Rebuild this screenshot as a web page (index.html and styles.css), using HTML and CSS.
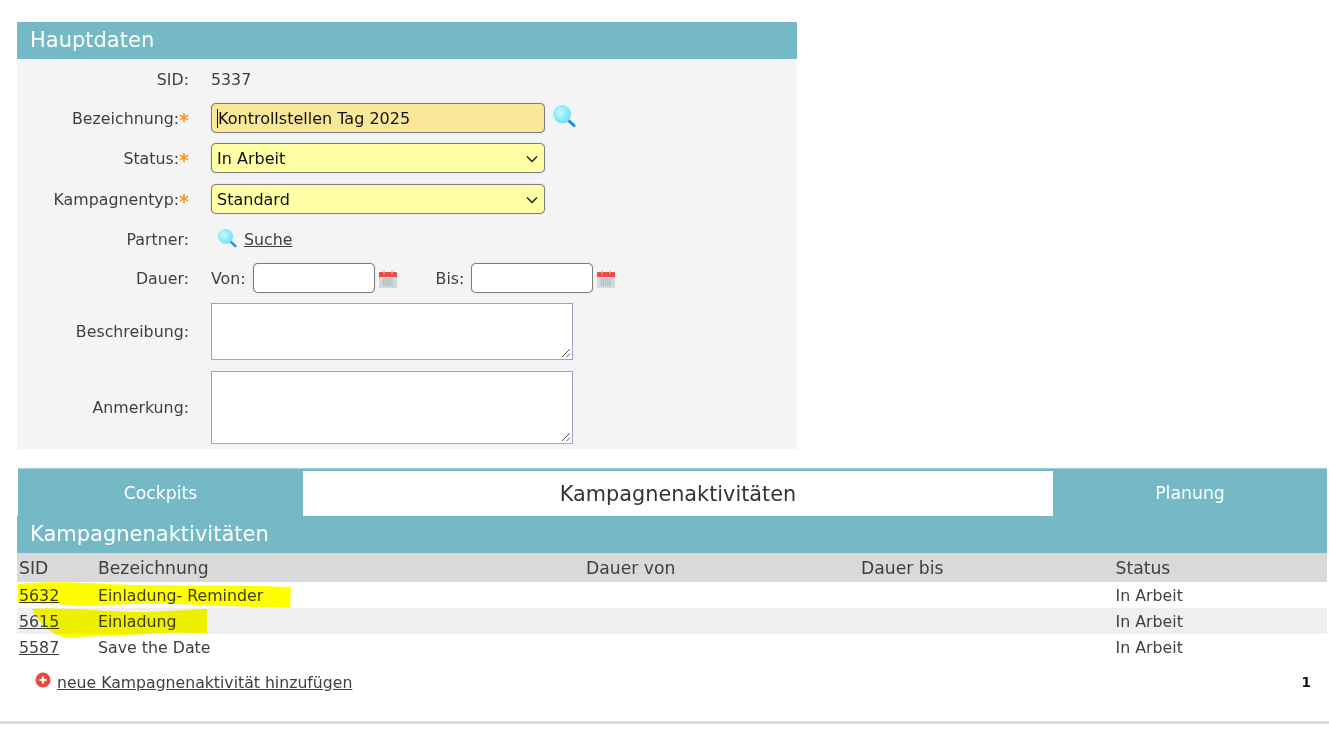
FILE: index.html
```html
<!DOCTYPE html>
<html lang="de">
<head>
<meta charset="utf-8">
<title>Kampagne</title>
<link rel="stylesheet" href="styles.css">
</head>
<body>
<svg width="0" height="0" class="defs">
  <defs>
    <radialGradient id="lens" cx="40%" cy="40%" r="70%"><stop offset="0" stop-color="#c4fbff"/><stop offset="1" stop-color="#62def7"/></radialGradient>
    <symbol id="mag" viewBox="0 0 24 24">
      <path d="M16 16l6 5.500" stroke="#1f92de" stroke-width="3" stroke-linecap="round" fill="none"/>
      <circle cx="9.5" cy="9.5" r="9.500" fill="url(#lens)"/>
    </symbol>
    <symbol id="cal" viewBox="0 0 18 18">
      <rect x="0" y="2" width="18" height="16" rx="1" fill="#cfd8dc"/>
      <path d="M0 3a1 1 0 0 1 1-1h16a1 1 0 0 1 1 1v4H0z" fill="#ee4b43"/>
      <path d="M5 .5v3.500M13 .5v3.500" stroke="#b0bec5" stroke-width="1.3"/>
      <path d="M4 9h10M4 11h10M4 13h10M4 15h10" stroke="#90a4ae" stroke-width="1" stroke-dasharray="1.2 .9"/>
    </symbol>
  </defs>
</svg>

<main class="page">
  <section class="panel">
    <h2 class="bar">Hauptdaten</h2>
    <div class="form">
      <div class="row row-sid">
        <span class="label">SID:</span>
        <span class="value">5337</span>
      </div>
      <div class="row row-field">
        <span class="label">Bezeichnung:<b class="req">*</b></span>
        <span class="input input-focus"><i class="caret"></i>Kontrollstellen Tag 2025</span>
        <svg class="mag-big"><use href="#mag"/></svg>
      </div>
      <div class="row row-field">
        <span class="label">Status:<b class="req">*</b></span>
        <span class="input input-select">In Arbeit
          <svg class="chev" viewBox="0 0 12 8"><path d="M1 1.5l5 5 5-5" fill="none" stroke="#222" stroke-width="1.5"/></svg>
        </span>
      </div>
      <div class="row row-field row-type">
        <span class="label">Kampagnentyp:<b class="req">*</b></span>
        <span class="input input-select">Standard
          <svg class="chev" viewBox="0 0 12 8"><path d="M1 1.5l5 5 5-5" fill="none" stroke="#222" stroke-width="1.5"/></svg>
        </span>
      </div>
      <div class="row row-partner">
        <span class="label">Partner:</span>
        <svg class="mag-small"><use href="#mag"/></svg>
        <a class="link" href="#">Suche</a>
      </div>
      <div class="row row-date">
        <span class="label">Dauer:</span>
        <span class="value">Von:</span>
        <span class="date"></span>
        <svg class="cal"><use href="#cal"/></svg>
        <span class="value bis">Bis:</span>
        <span class="date"></span>
        <svg class="cal"><use href="#cal"/></svg>
      </div>
      <div class="row row-area area-a">
        <span class="label">Beschreibung:</span>
        <span class="area"><svg class="grip" viewBox="0 0 10 10"><path d="M1 9l8-8M5.500 9l3.500-3.500" stroke="#555" stroke-width="1"/></svg></span>
      </div>
      <div class="row row-area area-b">
        <span class="label">Anmerkung:</span>
        <span class="area"><svg class="grip" viewBox="0 0 10 10"><path d="M1 9l8-8M5.500 9l3.500-3.500" stroke="#555" stroke-width="1"/></svg></span>
      </div>
    </div>
  </section>

  <nav class="tabs">
    <a class="tab tab-cockpits">Cockpits</a>
    <a class="tab tab-active">Kampagnenaktivitäten</a>
    <a class="tab tab-plan">Planung</a>
  </nav>

  <section class="list">
    <h2 class="bar">Kampagnenaktivitäten</h2>
    <div class="grid head">
      <span>SID</span><span>Bezeichnung</span><span>Dauer von</span><span>Dauer bis</span><span>Status</span>
    </div>
    <div class="grid line">
      <a class="link" href="#">5632</a><span>Einladung- Reminder</span><span></span><span></span><span>In Arbeit</span>
    </div>
    <div class="grid line alt">
      <a class="link" href="#">5615</a><span>Einladung</span><span></span><span></span><span>In Arbeit</span>
    </div>
    <div class="grid line">
      <a class="link" href="#">5587</a><span>Save the Date</span><span></span><span></span><span>In Arbeit</span>
    </div>
    <div class="foot">
      <svg class="plus" viewBox="0 0 16 16"><circle cx="8" cy="8" r="7.500" fill="#e8483f"/><path d="M8 4.500v7M4.500 8h7" stroke="#fff" stroke-width="2.200"/></svg>
      <a class="link" href="#">neue Kampagnenaktivität hinzufügen</a>
      <b class="pager">1</b>
    </div>
  </section>

  <svg class="marker" viewBox="0 0 280 60" width="280" height="60">
    <path d="M0 4C40 0 70 4 120 5S240 5 273 7L272 28C240 27 210 26 180 25 120 22 90 26 60 25 35 24 15 24 0 23z" fill="#ffff00"/>
    <path d="M14 29C60 27 90 33 130 32 160 31 180 29 189 29V53C170 53 150 52 130 54 100 55 70 57 45 57 30 53 20 40 14 29z" fill="#ffff00"/>
  </svg>
</main>
<div class="rule"></div>
</body>
</html>
```
FILE: styles.css
```css
* { box-sizing: border-box; }
html, body { margin: 0; padding: 0; background: #fff; }
body {
  width: 1329px;
  height: 734px;
  overflow: hidden;
  font-family: "DejaVu Sans", Verdana, sans-serif;
  font-size: 15.8px;
  color: #3f3f3f;
}
.defs { position: absolute; }
.page { position: relative; padding: 22px 2px 0 17px; height: 721px; }

.panel { width: 780px; }
.bar {
  margin: 0;
  height: 37px;
  padding-left: 13px;
  background: #75b9c7;
  color: #fff;
  font-weight: 400;
  font-size: 21px;
  line-height: 36px;
}
.form { background: #f4f4f4; height: 390px; padding-top: 1px; }
.row { display: flex; align-items: center; }
.label { width: 172px; text-align: right; margin-right: 22px; white-space: nowrap; }
.req { position: relative; top: 3px; color: #f7941d; font-weight: 700; font-size: 19px; line-height: 0; }
.row-sid { height: 38px; }
.row-field { height: 40px; }
.row-type { margin-top: 1px; }
.row-partner { height: 40px; }
.row-date { height: 38px; }
.value { white-space: nowrap; }

.input {
  width: 334px;
  height: 30px;
  display: flex;
  align-items: center;
  position: relative;
  padding: 1px 0 0 5px;
  border: 1px solid #7f7f7f;
  border-radius: 5px;
  box-shadow: 0 0 1px #8f8f8f;
  background: #ffffa6;
  color: #111;
  font-size: 16px;
}
.input-focus { background: #f9e79a; }
.caret { display: inline-block; width: 1px; height: 19px; background: #111; }
.chev { position: absolute; right: 6px; top: 11px; width: 12px; height: 8px; }
.mag-big { width: 23px; height: 23px; margin-left: 8px; margin-top: -4px; }
.mag-small { width: 19px; height: 19px; margin-left: 7px; margin-right: 7px; margin-top: -2px; }
.link { color: #3f3f3f; text-decoration: underline; }

.date {
  width: 122px;
  height: 30px;
  margin-left: 7px;
  border: 1px solid #7f7f7f;
  border-radius: 5px;
  box-shadow: 0 0 1px #8f8f8f;
  background: #fff;
}
.cal { width: 18px; height: 18px; margin-left: 4px; margin-top: 2px; }
.bis { margin-left: 39px; }

.area {
  width: 362px;
  display: block;
  position: relative;
  border: 1px solid #9f9fd0;
  background: #fff;
}
.area-a { margin-top: 6px; height: 57px; }
.area-a .area { height: 57px; }
.area-b { margin-top: 11px; height: 73px; }
.area-b .area { height: 73px; }
.grip { position: absolute; right: 1px; bottom: 1px; width: 10px; height: 10px; }

.tabs {
  display: flex;
  margin: 19px 0 0 1px;
  height: 48px;
  background: #75b9c7;
  border-top: 1px solid #a2d0da;
  color: #fff;
  text-align: center;
}
.tab { display: block; line-height: 48px; font-size: 17.3px; }
.tab-cockpits { width: 285px; }
.tab-active {
  width: 750px;
  height: 45px;
  margin-top: 2px;
  background: #fff;
  color: #333;
  font-size: 20.8px;
  line-height: 46px;
}
.tab-plan { width: 274px; }

.grid {
  display: grid;
  grid-template-columns: 79px 488px 275px 254.500px 1fr;
  padding-left: 2px;
  align-items: center;
  white-space: nowrap;
}
.head { height: 29px; background: #d9d9d9; font-size: 17.2px; }
.line { height: 26px; padding-top: 1px; }
.alt { background: #efefef; }
.foot {
  display: flex;
  align-items: center;
  height: 44px;
  padding: 0 16px 0 18px;
  font-size: 15.7px;
}
.plus { width: 16px; height: 16px; margin-right: 6px; margin-top: -5px; }
.pager { margin-left: auto; color: #111; font-size: 13.5px; font-weight: 700; }

.marker { position: absolute; left: 18px; top: 580px; mix-blend-mode: multiply; }
.rule { height: 3px; background: #dcdcdc; }
```
